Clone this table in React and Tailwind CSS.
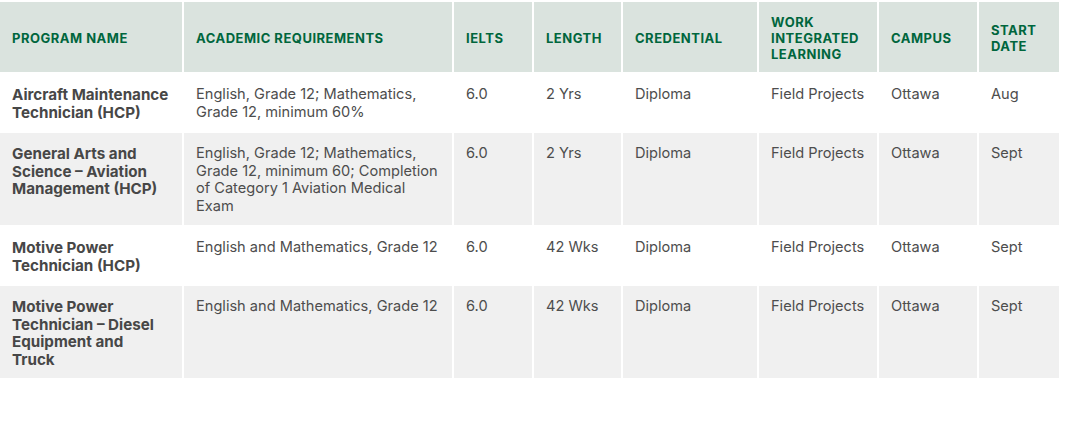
import React from 'react';

const headers = [
  'Program Name',
  'Academic Requirements',
  'IELTS',
  'Length',
  'Credential',
  'Work Integrated Learning',
  'Campus',
  'Start Date',
];

const programs = [
  {
    name: 'Aircraft Maintenance Technician (HCP)',
    reqs: 'English, Grade 12; Mathematics, Grade 12, minimum 60%',
    ielts: '6.0',
    length: '2 Yrs',
    credential: 'Diploma',
    wil: 'Field Projects',
    campus: 'Ottawa',
    start: 'Aug',
  },
  {
    name: 'General Arts and Science – Aviation Management (HCP)',
    reqs: 'English, Grade 12; Mathematics, Grade 12, minimum 60; Completion of Category 1 Aviation Medical Exam',
    ielts: '6.0',
    length: '2 Yrs',
    credential: 'Diploma',
    wil: 'Field Projects',
    campus: 'Ottawa',
    start: 'Sept',
  },
  {
    name: 'Motive Power Technician (HCP)',
    reqs: 'English and Mathematics, Grade 12',
    ielts: '6.0',
    length: '42 Wks',
    credential: 'Diploma',
    wil: 'Field Projects',
    campus: 'Ottawa',
    start: 'Sept',
  },
  {
    name: 'Motive Power Technician – Diesel Equipment and Truck',
    reqs: 'English and Mathematics, Grade 12',
    ielts: '6.0',
    length: '42 Wks',
    credential: 'Diploma',
    wil: 'Field Projects',
    campus: 'Ottawa',
    start: 'Sept',
  },
];

export default function App() {
  return (
    <div className="w-[1066px] h-[439px] bg-white pt-[2px]" style={{ fontFamily: 'Inter, "Open Sans", sans-serif' }}>
      <div className="grid grid-cols-[182px_268px_78px_87px_134px_118px_98px_80px] gap-[2px] w-[1059px]">
        {/* Header */}
        {headers.map((h) => (
          <div
            key={h}
            className="bg-[#dae3de] h-[70px] flex items-center pl-3 pr-2 pt-[1px] text-[13px] tracking-[0.5px] leading-[16px] font-bold uppercase text-[#00663d]"
          >
            {h}
          </div>
        ))}

        {/* Body rows */}
        {programs.map((p, i) => {
          const bg = i % 2 === 0 ? 'bg-white' : 'bg-[#f0f0f0]';
          const cell = `${bg} pl-3 pt-[12px] pb-[10px] leading-[17.5px] text-[#4d4d4d]`;
          return (
            <React.Fragment key={p.name}>
              <div className={`${cell} pr-[13px] text-[15.2px] font-bold text-[#474747]`}>{p.name}</div>
              <div className={`${cell} pr-2 text-[14.6px]`}>{p.reqs}</div>
              <div className={`${cell} pr-2 text-[14.6px]`}>{p.ielts}</div>
              <div className={`${cell} pr-2 text-[14.6px]`}>{p.length}</div>
              <div className={`${cell} pr-2 text-[14.6px]`}>{p.credential}</div>
              <div className={`${cell} pr-2 text-[14.6px]`}>{p.wil}</div>
              <div className={`${cell} pr-2 text-[14.6px]`}>{p.campus}</div>
              <div className={`${cell} pr-2 text-[14.6px]`}>{p.start}</div>
            </React.Fragment>
          );
        })}
      </div>
    </div>
  );
}
